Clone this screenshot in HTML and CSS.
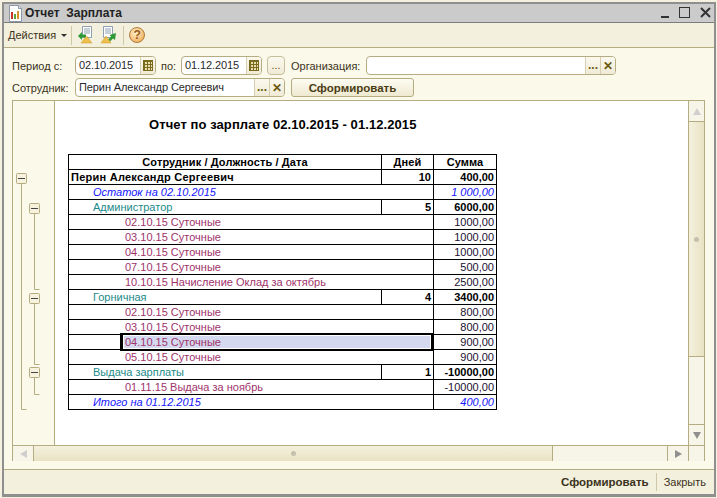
FILE: index.html
```html
<!DOCTYPE html>
<html lang="ru">
  <head>
    <meta charset="UTF-8" />
    <title>Отчет Зарплата</title>
    <link rel="stylesheet" href="styles.css">
  </head>
  <body>
    <div class="window">
      <div class="titlebar">
        <svg class="title-icon" width="15" height="17" viewBox="0 0 15 17">
          <path d="M1.5 .5h9l3 3v13h-12z" fill="#fff" stroke="#8d97a8"/>
          <path d="M10.5 .5v3h3" fill="#dfe4ec" stroke="#8d97a8"/>
          <rect x="3" y="7" width="2" height="7" fill="#c8372d"/>
          <rect x="6" y="9" width="2" height="5" fill="#5aa83c"/>
          <rect x="9" y="6" width="2" height="8" fill="#d9932b"/>
        </svg>
        <span class="title-text">Отчет&nbsp; Зарплата</span>
        <div class="win-buttons">
          <svg width="50" height="12" viewBox="0 0 50 12">
            <rect x="0" y="9" width="8" height="2" fill="#333"/>
            <rect x="18.5" y=".5" width="10" height="10" fill="none" stroke="#333"/>
            <path d="M40 1l9 9M49 1l-9 9" stroke="#333" stroke-width="2" fill="none"/>
          </svg>
        </div>
      </div>

      <div class="toolbar">
        <span class="menu">Действия</span>
        <span class="caret"></span>
        <span class="sep"></span>
        <svg class="tool-icon" width="18" height="18" viewBox="0 0 18 18">
          <path d="M5.5 .5h9v11h-9z" fill="#fff" stroke="#8fa0b5"/>
          <path d="M7 3h6M7 5h6M7 7h6" stroke="#8fa0b5"/>
          <path d="M1 10l4-4v2.500h4v3h-4v2.500z" fill="#2f9a35"/>
          <path d="M9.500 10l5.500 7h-11z" fill="#eebf4a" stroke="#c89a2c" stroke-width=".5"/>
        </svg>
        <svg class="tool-icon tool-icon-b" width="18" height="18" viewBox="0 0 18 18">
          <path d="M3.500 .5h9v11h-9z" fill="#fff" stroke="#8fa0b5"/>
          <path d="M5 3h6M5 5h6M5 7h6" stroke="#8fa0b5"/>
          <path d="M16 7l-1 7-2-1.500-3 3-2-2 3-3-1.500-1.500z" fill="#2f9a35"/>
          <path d="M6 10l5 7h-10z" fill="#eebf4a" stroke="#c89a2c" stroke-width=".5"/>
        </svg>
        <span class="sep"></span>
        <span class="help">?</span>
      </div>

      <div class="filters">
        <div class="filter-row">
          <label class="lbl lbl-first">Период с:</label>
          <div class="field field-date">
            <span class="field-value">02.10.2015</span>
            <span class="field-btn cal"><i></i></span>
          </div>
          <label class="lbl lbl-to">по:</label>
          <div class="field field-date">
            <span class="field-value">01.12.2015</span>
            <span class="field-btn cal"><i></i></span>
          </div>
          <span class="btn-dots">...</span>
          <label class="lbl lbl-org">Организация:</label>
          <div class="field field-org">
            <span class="field-value"></span>
            <span class="field-btn dots">...</span>
            <span class="field-btn clear">✕</span>
          </div>
        </div>
        <div class="filter-row">
          <label class="lbl lbl-first">Сотрудник:</label>
          <div class="field field-emp">
            <span class="field-value">Перин Александр Сергеевич</span>
            <span class="field-btn dots">...</span>
            <span class="field-btn clear">✕</span>
          </div>
          <button class="btn-make">Сформировать</button>
        </div>
      </div>

      <div class="report">
        <div class="gutter">
          <svg width="41" height="344" viewBox="0 0 41 344">
            <g fill="none" stroke="#b5ac82">
              <path d="M8.500 83v225.500h5"/>
              <path d="M21.500 112v76.500h5"/>
              <path d="M21.500 202v61.500h5"/>
              <path d="M21.500 277v16.500h5"/>
            </g>
            <g fill="#f6f2dd" stroke="#b5ac82">
              <rect x="3.500" y="72.500" width="10" height="10" rx="1"/>
              <rect x="16.500" y="102.500" width="10" height="10" rx="1"/>
              <rect x="16.500" y="192.500" width="10" height="10" rx="1"/>
              <rect x="16.500" y="266.500" width="10" height="10" rx="1"/>
            </g>
            <g stroke="#444">
              <path d="M5 77.500h7M18 107.500h7M18 197.500h7M18 271.500h7"/>
            </g>
          </svg>
        </div>

        <div class="sheet">
          <h2 class="sheet-title">Отчет по зарплате 02.10.2015 - 01.12.2015</h2>
          <table class="sheet-table">
            <colgroup>
              <col class="col-name" />
              <col class="col-days" />
              <col class="col-sum" />
            </colgroup>
            <tr class="head"><td>Сотрудник / Должность / Дата</td><td>Дней</td><td>Сумма</td></tr>
            <tr class="total"><td>Перин Александр Сергеевич</td><td class="num">10</td><td class="num">400,00</td></tr>
            <tr class="balance"><td colspan="2" class="lvl1">Остаток на 02.10.2015</td><td class="num">1 000,00</td></tr>
            <tr class="group"><td class="lvl1">Администратор</td><td class="num">5</td><td class="num">6000,00</td></tr>
            <tr class="item"><td colspan="2" class="lvl2">02.10.15 Суточные</td><td class="num">1000,00</td></tr>
            <tr class="item"><td colspan="2" class="lvl2">03.10.15 Суточные</td><td class="num">1000,00</td></tr>
            <tr class="item"><td colspan="2" class="lvl2">04.10.15 Суточные</td><td class="num">1000,00</td></tr>
            <tr class="item"><td colspan="2" class="lvl2">07.10.15 Суточные</td><td class="num">500,00</td></tr>
            <tr class="item"><td colspan="2" class="lvl2">10.10.15 Начисление Оклад за октябрь</td><td class="num">2500,00</td></tr>
            <tr class="group"><td class="lvl1">Горничная</td><td class="num">4</td><td class="num">3400,00</td></tr>
            <tr class="item"><td colspan="2" class="lvl2">02.10.15 Суточные</td><td class="num">800,00</td></tr>
            <tr class="item"><td colspan="2" class="lvl2">03.10.15 Суточные</td><td class="num">800,00</td></tr>
            <tr class="item"><td colspan="2" class="cell-sel"><div class="sel">04.10.15 Суточные</div></td><td class="num">900,00</td></tr>
            <tr class="item"><td colspan="2" class="lvl2">05.10.15 Суточные</td><td class="num">900,00</td></tr>
            <tr class="group"><td class="lvl1">Выдача зарплаты</td><td class="num">1</td><td class="num">-10000,00</td></tr>
            <tr class="item"><td colspan="2" class="lvl2">01.11.15 Выдача за ноябрь</td><td class="num">-10000,00</td></tr>
            <tr class="balance"><td colspan="2" class="lvl1">Итого на 01.12.2015</td><td class="num">400,00</td></tr>
          </table>
        </div>

        <div class="vscroll">
          <span class="sb-btn sb-up"><i></i></span>
          <span class="vthumb"><b></b></span>
          <span class="vtrack"></span>
          <span class="sb-btn sb-down"><i></i></span>
        </div>

        <div class="hscroll">
          <span class="sb-btn sb-left"><i></i></span>
          <span class="hthumb"><b></b></span>
          <span class="htrack"></span>
          <span class="sb-btn sb-right"><i></i></span>
        </div>
        <div class="corner"></div>
      </div>

      <div class="footer">
        <span class="foot-make">Сформировать</span>
        <span class="foot-sep"></span>
        <span class="foot-close">Закрыть</span>
      </div>
    </div>
  </body>
</html>
```

FILE: styles.css
```css
html, body {
  margin: 0;
  padding: 0;
}
body {
  width: 717px;
  height: 498px;
  overflow: hidden;
  background-color: #f4f1e0;
  font-family: "Liberation Sans", Arial, sans-serif;
  font-size: 11px;
  color: #333;
}
.window {
  box-sizing: border-box;
  width: 714px;
  height: 495px;
  margin: 2px 0 0 2px;
  border: 2px solid #8f8f8f;
  border-bottom-width: 3px;
  background-color: #fbf9ea;
  display: flex;
  flex-direction: column;
}

/* Заголовок */
.titlebar {
  flex: 0 0 19px;
  box-sizing: border-box;
  display: flex;
  align-items: center;
  background-color: #cbcbcb;
  border-bottom: 1px solid #7c7c7c;
  padding-left: 4px;
}
.title-icon {
  margin-right: 2px;
}
.title-text {
  font-size: 12px;
  font-weight: bold;
  color: #222;
}
.win-buttons {
  margin-left: auto;
  margin-right: 3px;
  height: 12px;
}

/* Панель инструментов */
.toolbar {
  flex: 0 0 25px;
  box-sizing: border-box;
  display: flex;
  align-items: center;
  background-color: #f3f0dd;
  border-bottom: 1px solid #b5ac82;
  padding-left: 4px;
}
.menu {
  font-size: 11px;
  color: #3a3320;
}
.caret {
  width: 0;
  height: 0;
  margin-left: 5px;
  border-left: 3px solid transparent;
  border-right: 3px solid transparent;
  border-top: 3px solid #333;
}
.sep {
  width: 1px;
  height: 19px;
  margin: 0 5px 0 4px;
  background-color: #d0c9a8;
}
.tool-icon-b {
  margin-left: 5px;
}
.tool-icon-b + .sep {
  margin-left: 5px;
}
.help {
  box-sizing: border-box;
  width: 16px;
  height: 16px;
  border-radius: 50%;
  border: 1px solid #b07a3a;
  background: radial-gradient(circle at 40% 35%, #fff0cf, #f0b05c 80%);
  color: #9a5a18;
  font-size: 12px;
  font-weight: bold;
  line-height: 14px;
  text-align: center;
}

/* Отбор */
.filters {
  flex: 0 0 52px;
  box-sizing: border-box;
  padding-top: 8px;
  display: flex;
  flex-direction: column;
  gap: 3px;
}
.filter-row {
  display: flex;
  align-items: center;
  height: 19px;
}
.lbl {
  font-size: 11px;
  color: #3a3320;
  white-space: nowrap;
}
.lbl-first {
  width: 63px;
  margin-left: 8px;
  flex: none;
}
.lbl-to {
  width: 20px;
  margin-left: 5px;
  flex: none;
}
.lbl-org {
  width: 75px;
  margin-left: 6px;
  flex: none;
}
.field {
  box-sizing: border-box;
  display: flex;
  height: 19px;
  border: 1px solid #b5ac82;
  border-radius: 4px;
  background-color: #fff;
  overflow: hidden;
  flex: none;
}
.field-date {
  width: 81px;
}
.field-emp {
  width: 210px;
}
.field-org {
  width: 250px;
}
.field-value {
  flex: 1;
  padding-left: 3px;
  font-size: 11px;
  letter-spacing: -0.1px;
  line-height: 17px;
  color: #2a2a2a;
  white-space: nowrap;
}
.field-btn {
  box-sizing: border-box;
  display: flex;
  align-items: center;
  justify-content: center;
  width: 15px;
  border-left: 1px solid #d5cfb0;
  background: linear-gradient(#fbf9ef, #f0ebd6);
  color: #6b5a10;
}
.dots {
  font-weight: bold;
  font-size: 12px;
  line-height: 17px;
}
.clear {
  font-size: 12px;
  font-weight: bold;
}
.cal i {
  display: block;
  box-sizing: border-box;
  width: 10px;
  height: 11px;
  border: 1px solid #7a6a1e;
  background:
    repeating-linear-gradient(90deg, #7a6a1e 0 1px, transparent 1px 3px),
    repeating-linear-gradient(#7a6a1e 0 1px, #e9dfae 1px 3px);
}
.btn-dots {
  box-sizing: border-box;
  flex: none;
  width: 18px;
  height: 19px;
  margin-left: 5px;
  border: 1px solid #c6bf9c;
  border-radius: 4px;
  background: linear-gradient(#fbf9ef, #f0ebd6);
  color: #6b5a10;
  font-size: 11px;
  line-height: 17px;
  text-align: center;
}
.btn-make {
  box-sizing: border-box;
  width: 123px;
  height: 19px;
  margin-left: 6px;
  padding: 0;
  border: 1px solid #b5ac82;
  border-radius: 3px;
  background: linear-gradient(#fdfcf3, #efe9d0);
  font-family: inherit;
  font-size: 11.500px;
  font-weight: bold;
  color: #4a3c14;
}

/* Отчет */
.report {
  flex: none;
  box-sizing: border-box;
  width: 693px;
  height: 361px;
  margin-left: 8px;
  border: 1px solid #b5ac82;
  display: grid;
  grid-template-columns: 42px 1fr 16px;
  grid-template-rows: 1fr 16px;
}
.gutter {
  border-right: 1px solid #b5ac82;
}
.gutter svg {
  display: block;
}
.sheet {
  background-color: #fff;
  padding: 0 0 0 13px;
  overflow: hidden;
}
.sheet-title {
  margin: 16px 0 22px 81px;
  height: 15px;
  font-size: 13px;
  letter-spacing: 0.08px;
  line-height: 15px;
  font-weight: bold;
  color: #000;
  white-space: nowrap;
}
.sheet-table {
  border-collapse: collapse;
  table-layout: fixed;
  width: 428px;
  font-size: 11px;
}
.col-name {
  width: 313px;
}
.col-days {
  width: 52px;
}
.col-sum {
  width: 63px;
}
.sheet-table td {
  box-sizing: border-box;
  height: 15px;
  padding: 0 2px;
  border: 1px solid #000;
  line-height: 13px;
  white-space: nowrap;
  color: #000;
}
.head td {
  font-weight: bold;
  letter-spacing: 0.1px;
  text-align: center;
}
.total td,
.group td.num {
  font-weight: bold;
}
.total td:first-child {
  letter-spacing: 0.25px;
}
.group .lvl1 {
  color: #1c8a8a;
}
.balance td {
  color: #1414ff;
  font-style: italic;
}
.item td {
  color: #a0336a;
}
.item td.num {
  color: #1c1030;
}
.num {
  text-align: right;
}
.sheet-table td.lvl1 {
  padding-left: 24px;
}
.sheet-table td.lvl2 {
  padding-left: 56px;
}
.sheet-table td.cell-sel {
  padding: 0 0 0 51px;
}
.sel {
  position: relative;
  box-sizing: border-box;
  height: 18px;
  margin: -2px 0;
  padding: 1px 0 0 2px;
  border: 2px solid #000;
  border-left-width: 3px;
  box-shadow: inset 0 0 0 1px #fff;
  background-color: #d4d9ef;
}

/* Прокрутка */
.vscroll {
  grid-row: 1;
  grid-column: 3;
  display: flex;
  flex-direction: column;
  border-left: 1px solid #b5ac82;
}
.hscroll {
  grid-row: 2;
  grid-column: 1 / 3;
  display: flex;
  border-top: 1px solid #b5ac82;
}
.corner {
  grid-row: 2;
  grid-column: 3;
  border-top: 1px solid #b5ac82;
  border-left: 1px solid #b5ac82;
  background-color: #f7f5e8;
}
.sb-btn {
  box-sizing: border-box;
  flex: none;
  display: flex;
  align-items: center;
  justify-content: center;
  background-color: #f7f5e8;
}
.sb-btn i {
  width: 0;
  height: 0;
  display: block;
}
.sb-up,
.sb-down {
  height: 21px;
}
.sb-up {
  border-bottom: 1px solid #b5ac82;
}
.sb-down {
  border-top: 1px solid #b5ac82;
}
.sb-left,
.sb-right {
  width: 21px;
}
.sb-left {
  border-right: 1px solid #b5ac82;
}
.sb-right {
  border-left: 1px solid #b5ac82;
}
.sb-up i {
  border-left: 4px solid transparent;
  border-right: 4px solid transparent;
  border-bottom: 7px solid #cfcfcf;
}
.sb-down i {
  border-left: 4px solid transparent;
  border-right: 4px solid transparent;
  border-top: 7px solid #8f8f8f;
}
.sb-left i {
  border-top: 4px solid transparent;
  border-bottom: 4px solid transparent;
  border-right: 7px solid #cfcfcf;
}
.sb-right i {
  border-top: 4px solid transparent;
  border-bottom: 4px solid transparent;
  border-left: 7px solid #8f8f8f;
}
.vthumb,
.hthumb {
  display: flex;
  align-items: center;
  justify-content: center;
  flex: none;
}
.vthumb {
  height: 234px;
  border-bottom: 1px solid #b5ac82;
  background: linear-gradient(90deg, #f4f0dc, #e9e3c4);
}
.hthumb {
  width: 518px;
  border-right: 1px solid #b5ac82;
  background: linear-gradient(#f4f0dc, #e9e3c4);
}
.vthumb b,
.hthumb b {
  width: 5px;
  height: 5px;
  border-radius: 50%;
  background-color: #c4c0ae;
}
.vtrack,
.htrack {
  flex: 1;
  background-color: #f7f5e8;
}

/* Низ формы */
.footer {
  flex: 1;
  box-sizing: border-box;
  margin-top: 8px;
  display: flex;
  align-items: center;
  justify-content: flex-end;
  background-color: #f3f0dd;
  border-top: 1px solid #b5ac82;
  padding-right: 8px;
}
.foot-make {
  font-weight: bold;
  font-size: 11.500px;
  color: #3a3320;
}
.foot-sep {
  width: 1px;
  height: 18px;
  margin: 0 7px;
  background-color: #d0c9a8;
}
.foot-close {
  font-size: 11px;
  color: #3a3320;
}
```
